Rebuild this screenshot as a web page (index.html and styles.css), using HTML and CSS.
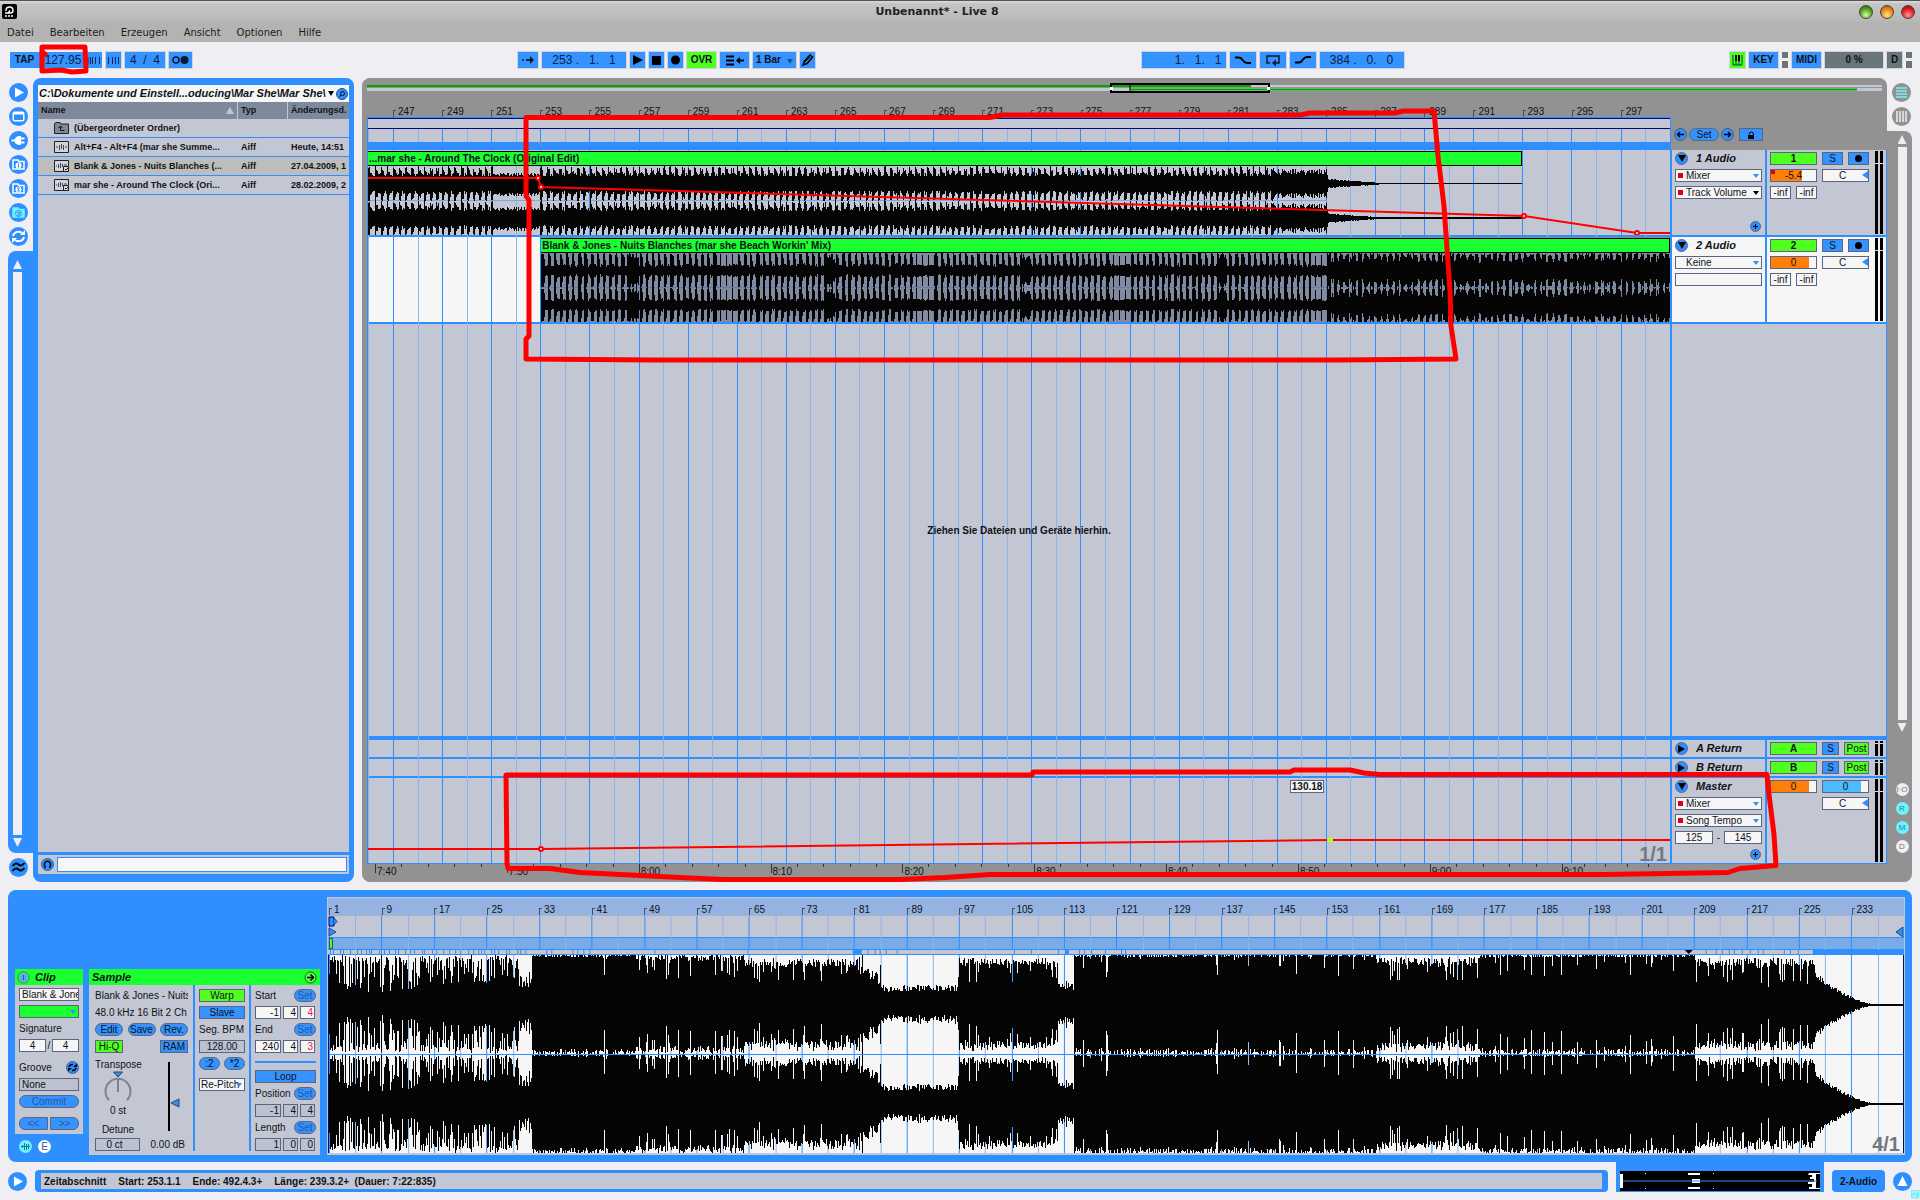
FILE: index.html
```html
<!DOCTYPE html>
<html lang="de">
<head>
<meta charset="utf-8">
<title>Unbenannt* - Live 8</title>
<meta name="viewport" content="width=device-width, initial-scale=1">
<link rel="stylesheet" href="styles.css">
</head>
<body>
<header class="titlebar">
  <svg class="app-icon" viewBox="0 0 15 15" width="15" height="15"><rect width="15" height="15" rx="2" fill="#000"/><path d="M4 7V6.500Q4 3 7.500 3T11 6.500Q11 9 8.500 9H6L8 6.500M3 9h3M3 12h2M6 12h2M9 12h2" fill="none" stroke="#fff" stroke-width="1.400"/></svg>
  <h1>Unbenannt* - Live 8</h1>
  <div class="orbs"><button class="orb orb-green" aria-label="Minimieren"></button><button class="orb orb-amber" aria-label="Maximieren"></button><button class="orb orb-red" aria-label="Schließen"></button></div>
</header>
<nav class="menubar"><a href="#">Datei</a><a href="#">Bearbeiten</a><a href="#">Erzeugen</a><a href="#">Ansicht</a><a href="#">Optionen</a><a href="#">Hilfe</a></nav>

<section class="transport" aria-label="Transport">
  <div class="group">
    <div class="joined"><button class="tb w29">TAP</button><input class="tb num tempo" aria-label="Tempo" value="127.95"><button class="tb w15" aria-label="Nudge -"><svg viewBox="0 0 15 16" width="15" height="16"><path d="M1 5v7M3.500 5v7M5.500 5v7M8.500 5v7M12.500 5v7" stroke="#0b2a55"/></svg></button></div>
    <button class="tb w15" aria-label="Nudge +"><svg viewBox="0 0 15 16" width="15" height="16"><path d="M2.500 5v7M6.500 5v7M9.500 5v7M12.500 5v7" stroke="#0b2a55"/></svg></button>
    <button class="tb num w40">4&nbsp; /&nbsp; 4</button>
    <button class="tb w23" aria-label="Metronom"><svg viewBox="0 0 23 16" width="23" height="16"><circle cx="7" cy="8" r="3" fill="none" stroke="#0b1a30" stroke-width="1.500"/><circle cx="15.500" cy="8" r="4" fill="#0b1a30"/></svg></button>
  </div>
  <div class="group mid">
    <button class="tb w20" aria-label="Folgen"><svg viewBox="0 0 20 16" width="20" height="16"><path d="M4 8h2M8 8h2" stroke="#0b3a75" stroke-width="2"/><path d="M9 7h3V4l4 4-4 4V9H9z" fill="#0b1a30"/></svg></button>
    <button class="tb num w84">253 . &nbsp; 1. &nbsp; 1</button>
    <button class="tb w15" aria-label="Start"><svg viewBox="0 0 15 16" width="15" height="16"><path d="M3 3l10 5-10 5z" fill="#000"/></svg></button>
    <button class="tb w15" aria-label="Stopp"><svg viewBox="0 0 15 16" width="15" height="16"><path d="M3 4h9v9H3z" fill="#000"/></svg></button>
    <button class="tb w15" aria-label="Aufnahme"><svg viewBox="0 0 15 16" width="15" height="16"><circle cx="7.500" cy="8" r="4.500" fill="#000"/></svg></button>
    <button class="tb green w29">OVR</button>
    <button class="tb w29" aria-label="Zurück zum Arrangement"><svg viewBox="0 0 29 16" width="29" height="16"><path d="M6 4.500h8M6 8.500h8M6 12.500h8M17 8.500h7" stroke="#000" stroke-width="2"/><path d="M16 8.500l4-3.500v7z"/></svg></button>
    <span class="tb quant w43"><select aria-label="Quantisierung"><option>1 Bar</option></select></span>
    <button class="tb w15" aria-label="Stift"><svg viewBox="0 0 15 16" width="15" height="16"><path d="M3 13l1.500-4L10 3l2.500 2L7 11.500z" fill="none" stroke="#000" stroke-width="1.500"/><path d="M5 10l5-5" stroke="#000"/></svg></button>
  </div>
  <div class="group loopgroup">
    <button class="tb num w84 tailed">1. &nbsp; 1. &nbsp; 1</button>
    <button class="tb w26" aria-label="Punch-In"><svg viewBox="0 0 26 16" width="26" height="16"><path d="M5 5.500h4q2 0 4 3t5 2.500h3" fill="none" stroke="#000" stroke-width="2"/></svg></button>
    <button class="tb w26" aria-label="Loop"><svg viewBox="0 0 26 16" width="26" height="16"><path d="M10 11H7V4h12v7h-4" fill="none" stroke="#0b1a30" stroke-width="1.500"/><path d="M12 11l4-3.500v7z" fill="#0b1a30"/></svg></button>
    <button class="tb w26" aria-label="Punch-Out"><svg viewBox="0 0 26 16" width="26" height="16"><path d="M5 10.500h4q2 0 4-3t5-2.500h3" fill="none" stroke="#000" stroke-width="2"/></svg></button>
    <button class="tb num w84">384 . &nbsp; 0. &nbsp; 0</button>
  </div>
  <div class="group end">
    <button class="tb green w15" aria-label="Keyboard"><svg viewBox="0 0 15 16" width="15" height="16"><path d="M3 3v10h9V3M6 3v10M9 3v10" fill="none" stroke="#043" /><path d="M5 3h2v6H5zM8 3h2v6H8z"/></svg></button>
    <button class="tb w29">KEY</button>
    <i class="leds"></i>
    <button class="tb w29">MIDI</button>
    <span class="tb gray w58">0 %</span>
    <span class="tb gray w15">D</span>
    <i class="leds"></i>
  </div>
</section>

<main class="workspace">
  <aside class="rail">
    <button class="rb" aria-label="Browser"><svg viewBox="0 0 19 19"><circle cx="9.500" cy="9.500" r="9.500"/><path d="M6 4.500l9 5-9 5z" fill="#fff"/></svg></button>
    <button class="rb" aria-label="Live-Geräte"><svg viewBox="0 0 19 19"><circle cx="9.500" cy="9.500" r="9.500"/><rect x="3.500" y="4.500" width="12" height="10" rx="2" fill="#fff"/><path d="M5 7.500h9V13H5z" fill="#2f8fff"/></svg></button>
    <button class="rb" aria-label="Plug-Ins"><svg viewBox="0 0 19 19"><circle cx="9.500" cy="9.500" r="9.500"/><path d="M2.500 9.500H6" stroke="#fff" stroke-width="2"/><path d="M12 5v9H9.500Q5.500 13 5.500 9.500T9.500 5z" fill="#fff"/><path d="M12 7.500h3.500M12 11.500h3.500" stroke="#fff" stroke-width="2"/></svg></button>
    <button class="rb" aria-label="Datei-Browser 1"><svg viewBox="0 0 19 19"><circle cx="9.500" cy="9.500" r="9.500"/><path d="M4 5h5l1 1.500h5V14H4z" fill="none" stroke="#fff" stroke-width="1.500"/><circle cx="9.500" cy="10.500" r="3" fill="#fff"/><path d="M9.500 8.500v4" stroke="#2f8fff"/></svg></button>
    <button class="rb" aria-label="Datei-Browser 2"><svg viewBox="0 0 19 19"><circle cx="9.500" cy="9.500" r="9.500"/><path d="M4 5h5l1 1.500h5V14H4z" fill="none" stroke="#fff" stroke-width="1.500"/><circle cx="9.500" cy="10.500" r="3" fill="#fff"/><path d="M8 9h2.500L8.500 12H11" fill="none" stroke="#2f8fff"/></svg></button>
    <button class="rb" aria-label="Datei-Browser 3"><svg viewBox="0 0 19 19"><circle cx="9.500" cy="9.500" r="9.500"/><path d="M4 5h5l1 1.500h5V14H4z" fill="#6ff2ff" stroke="#6ff2ff" stroke-width="1.500"/><circle cx="9.500" cy="10.500" r="3" fill="none" stroke="#2f8fff"/><path d="M8.500 9.500h2l-1 1h1v1.500h-2" fill="none" stroke="#2f8fff"/></svg></button>
    <button class="rb" aria-label="Hot-Swap"><svg viewBox="0 0 19 19"><circle cx="9.500" cy="9.500" r="9.500"/><path d="M4 9a5.500 5 0 0 1 9-3M15 10a5.500 5 0 0 1-9 3" fill="none" stroke="#fff" stroke-width="2"/><path d="M11 8h5V3zM8 11H3v5z" fill="#fff"/></svg></button>
    <div class="rail-scroll"><i class="tri up"></i><i class="thumb"></i><i class="tri down"></i></div>
    <button class="rb" aria-label="Groove-Pool"><svg viewBox="0 0 19 19"><circle cx="9.500" cy="9.500" r="9.500"/><path d="M3.500 8q3-4 6-1.500t6-1.500M3.500 13q3-4 6-1.500t6-1.500" fill="none" stroke="#000" stroke-width="2"/></svg></button>
  </aside>

  <section class="browser">
    <div class="path"><span>C:\Dokumente und Einstell...oducing\Mar She\Mar She\</span><i class="pathtri"></i><button class="mini" aria-label="Suchen"><svg viewBox="0 0 12 12" width="12" height="12"><circle cx="6" cy="6" r="5.500" fill="#2f8fff" stroke="#25507f"/><circle cx="6.500" cy="5.500" r="2" fill="none" stroke="#012"/><path d="M5 7L3.500 9" stroke="#012"/></svg></button></div>
    <table class="files">
      <thead><tr><th>Name<i class="sort"></i></th><th>Typ</th><th>Änderungsd.</th></tr></thead>
      <tbody>
        <tr><td><svg viewBox="0 0 15 12" width="15" height="12"><path d="M.5 11.500v-10L2 .5h4l1 1.500h7.500v9.500z" fill="#7f899c" stroke="#222"/><path d="M10.500 8.500H6.500V4M4.500 6l2-2 2 2" fill="none" stroke="#111"/></svg>(Übergeordneter Ordner)</td><td></td><td></td></tr>
        <tr><td><svg viewBox="0 0 15 12" width="15" height="12"><path d="M.5 .5h14v11H.5z" fill="#d0d4de" stroke="#222"/><path d="M2 6h2M5.500 4v5M7.500 3v5M9.500 4v5M11 6h2" fill="none" stroke="#444"/></svg>Alt+F4 - Alt+F4 (mar she Summe...</td><td>Aiff</td><td>Heute, 14:51</td></tr>
        <tr class="sel"><td><svg viewBox="0 0 15 12" width="15" height="12"><path d="M.5 .5h14v11H.5z" fill="#d0d4de" stroke="#222"/><path d="M2 6h1M4.500 4v4M6.500 3v5M8.500 4v3M10 5h3" fill="none" stroke="#444"/><path d="M9.500 6.500h5v5h-5zM11 9l1 1 2-2" fill="#d0d4de" stroke="#222"/></svg>Blank &amp; Jones - Nuits Blanches (...</td><td>Aiff</td><td>27.04.2009, 1</td></tr>
        <tr><td><svg viewBox="0 0 15 12" width="15" height="12"><path d="M.5 .5h14v11H.5z" fill="#d0d4de" stroke="#222"/><path d="M2 6h1M4.500 4v4M6.500 3v5M8.500 4v3M10 5h3" fill="none" stroke="#444"/><path d="M9.500 6.500h5v5h-5zM11 9l1 1 2-2" fill="#d0d4de" stroke="#222"/></svg>mar she - Around The Clock (Ori...</td><td>Aiff</td><td>28.02.2009, 2</td></tr>
      </tbody>
    </table>
    <div class="preview"><svg viewBox="0 0 13 13" width="13" height="13"><circle cx="6.500" cy="6.500" r="6" fill="#2f8fff" stroke="#3b5f8c"/><path d="M4.500 10Q2.500 7 4 4.500 6.500 2 9 4.500 10.500 7 8.500 10" fill="none" stroke="#012" stroke-width="1.500"/></svg><input aria-label="Vorhören"></div>
  </section>

  <section class="arrange">
    <div class="overview">
      <svg viewBox="0 0 1515 10" preserveAspectRatio="none"><path d="M0 2h1515v2H0zM0 5h1515v3H0z" fill="#c3c7d4"/><path d="M0 2h884v2H0zM763 5.500h727v2H763z" fill="#00a800"/><path d="M744 1h158v8H744z" fill="none" stroke="#000" stroke-width="2"/><path d="M763 2v6" stroke="#000"/><path d="M743 4h3v3h-3zM900 4h3v3h-3z" fill="#fff"/></svg>
    </div>
    <div class="ruler beat" id="beatRuler"></div>
    <div class="rows">
      <svg class="gridlines" id="arrGrid" preserveAspectRatio="none" viewBox="0 0 1302 100"></svg>
      <div class="scrub">
        <div class="scrub-lane"><div class="navy"></div><div class="markers"></div><div class="bluebar"><i></i></div></div>
        <div class="setbar"><button class="mini" aria-label="Vorheriger Locator"><svg viewBox="0 0 13 13" width="13" height="13"><circle cx="6.500" cy="6.500" r="6" fill="#2f8fff" stroke="#4b5b77"/><path d="M10 6.500H4M6 4L3.500 6.500 6 9" stroke="#000" stroke-width="1.500" fill="none"/></svg></button><button class="pill set-main">Set</button><button class="mini" aria-label="Nächster Locator"><svg viewBox="0 0 13 13" width="13" height="13"><circle cx="6.500" cy="6.500" r="6" fill="#2f8fff" stroke="#4b5b77"/><path d="M3 6.500h6M7 4l2.500 2.500L7 9" stroke="#000" stroke-width="1.500" fill="none"/></svg></button><button class="box blue lock" aria-label="Hüllkurven sperren"><svg viewBox="0 0 10 10" width="10" height="10"><path d="M2 5h6v4H2z"/><path d="M3 4.500Q3 2 5.500 2 7.500 2 7.500 5" fill="none" stroke="#000"/></svg></button></div>
      </div>

      <div class="row tall">
        <div class="lane">
          <div class="clip clip1"><div class="clipname">...mar she - Around The Clock (Original Edit)</div><svg id="wave1" class="wave" preserveAspectRatio="none"></svg></div>
          <svg class="auto" viewBox="0 0 1302 85" preserveAspectRatio="none"><path d="M0 28h170l3 9L1156 66l113 17h33"/><g class="node"><circle cx="170" cy="28" r="2"/><circle cx="173" cy="37" r="2"/><circle cx="1156" cy="66" r="2"/><circle cx="1269" cy="83" r="2"/></g></svg>
        </div>
        <div class="head">
          <div class="hl"><button class="fold down" aria-label="Zuklappen"></button><b>1 Audio</b></div>
          <label class="chooser"><i class="dot"></i><select aria-label="Gerät"><option>Mixer</option></select></label>
          <label class="chooser dark"><i class="dot"></i><select aria-label="Parameter"><option>Track Volume</option></select></label>
          <button class="plus" aria-label="Spur hinzufügen"></button>
        </div>
        <div class="mix"><div class="cells"><button class="box green act">1</button><button class="box blue">S</button><button class="box blue" aria-label="Scharf"><i class="rec"></i></button><span class="box vol v70"><i class="flag"></i>-5.4</span><span class="box white pan">C</span><span class="inf"><span class="box white">-inf</span><span class="box white">-inf</span></span></div><div class="meter"><i></i><i></i></div></div>
      </div>

      <div class="row tall picked">
        <div class="lane">
          <div class="clip clip2"><div class="clipname">Blank &amp; Jones - Nuits Blanches (mar she Beach Workin' Mix)</div><svg id="wave2" class="wave" preserveAspectRatio="none"></svg></div>
        </div>
        <div class="head">
          <div class="hl"><button class="fold down" aria-label="Zuklappen"></button><b>2 Audio</b></div>
          <label class="chooser"><i class="dot none"></i><select aria-label="Gerät"><option>Keine</option></select></label>
          <span class="box empty"></span>
        </div>
        <div class="mix"><div class="cells"><button class="box green act">2</button><button class="box blue">S</button><button class="box blue" aria-label="Scharf"><i class="rec"></i></button><span class="box vol v85">0</span><span class="box white pan">C</span><span class="inf"><span class="box white">-inf</span><span class="box white">-inf</span></span></div><div class="meter"><i></i><i></i></div></div>
      </div>

      <div class="row drop">
        <div class="lane"><p>Ziehen Sie Dateien und Geräte hierhin.</p></div>
        <div class="rest"></div>
      </div>

      <div class="row short">
        <div class="lane"></div>
        <div class="head"><div class="hl"><button class="fold" aria-label="Aufklappen"></button><b>A Return</b></div></div>
        <div class="mix"><div class="cells ret"><button class="box green act">A</button><button class="box blue">S</button><button class="box green post">Post</button></div><div class="meter"><i></i><i></i></div></div>
      </div>
      <div class="row short">
        <div class="lane"></div>
        <div class="head"><div class="hl"><button class="fold" aria-label="Aufklappen"></button><b>B Return</b></div></div>
        <div class="mix"><div class="cells ret"><button class="box green act">B</button><button class="box blue">S</button><button class="box green post">Post</button></div><div class="meter"><i></i><i></i></div></div>
      </div>
      <div class="row tall last">
        <div class="lane">
          <svg class="auto" viewBox="0 0 1302 85" preserveAspectRatio="none"><path d="M0 71h173l789-9h340"/><g class="node"><circle cx="173" cy="71" r="2"/></g><circle cx="962" cy="62" r="3" fill="#b8f53c"/></svg>
          <span class="tip">130.18</span><span class="zoomtag">1/1</span>
        </div>
        <div class="head">
          <div class="hl"><button class="fold down" aria-label="Zuklappen"></button><b>Master</b></div>
          <label class="chooser"><i class="dot"></i><select aria-label="Gerät"><option>Mixer</option></select></label>
          <label class="chooser"><i class="dot"></i><select aria-label="Parameter"><option>Song Tempo</option></select></label>
          <div class="range"><input class="box white" aria-label="Minimum" value="125"><span>-</span><input class="box white" aria-label="Maximum" value="145"></div>
          <button class="plus" aria-label="Spur hinzufügen"></button>
        </div>
        <div class="mix"><div class="cells"><span class="box vol v85 act">0</span><span class="box cue">0</span><span class="box white pan below">C</span></div><div class="meter"><i></i><i></i></div></div>
      </div>
    </div>
    <div class="ruler time" id="timeRuler"></div>
  </section>

  <aside class="right">
    <button class="rb gray" aria-label="Arrangement"><svg viewBox="0 0 19 19"><circle cx="9.500" cy="9.500" r="9.500"/><path d="M4 5h11M4 8h11M4 11h11M4 14h11" stroke="#6ff2ff" stroke-width="1.500"/></svg></button>
    <button class="rb gray" aria-label="Session"><svg viewBox="0 0 19 19"><circle cx="9.500" cy="9.500" r="9.500"/><path d="M5 4v11M8 4v11M11 4v11M14 4v11" stroke="#eee" stroke-width="1.500"/></svg></button>
    <div class="right-scroll"><i class="tri up"></i><i class="thumb"></i><i class="tri down"></i>
      <div class="toggles"><button>I·O</button><button class="on">R</button><button class="on">M</button><button>D</button></div></div>
  </aside>
</main>

<section class="detail">
  <div class="boxes">
    <div class="clipcol">
      <div class="panel clipbox">
        <h2><svg viewBox="0 0 13 13" width="13" height="13"><circle cx="6.500" cy="6.500" r="5.500" fill="#5fd0a0" stroke="#3b7f5c"/><circle cx="6.500" cy="6.500" r="3.500" fill="#4af"/><path d="M6.500 4v5" stroke="#1b5f9c"/></svg>Clip</h2>
        <div class="col">
          <input class="box white left" aria-label="Name" value="Blank &amp; Jones">
          <label class="chooser colorsel"><select aria-label="Farbe"><option></option></select></label>
          <span class="lbl">Signature</span>
          <div class="rowf sig"><input class="box white" aria-label="Zähler" value="4"><span>/</span><input class="box white" aria-label="Nenner" value="4"></div>
          <div class="rowf lbl gap5"><span>Groove</span><button class="mini" aria-label="Groove Hot-Swap"><svg viewBox="0 0 13 13" width="13" height="13"><circle cx="6.500" cy="6.500" r="6" fill="#2f8fff" stroke="#3b5f8c"/><path d="M3 6q1-3 4-2.500M10 7q-1 3-4 2.500" fill="none" stroke="#000" stroke-width="1.500"/><path d="M7 6h4V2.500zM6 7H2v3.500z"/></svg></button></div>
          <button class="box plain left">None</button>
          <button class="pill dim">Commit</button>
          <div class="rowf pair gap5"><button class="box blue dim rl">&lt;&lt;</button><button class="box blue dim rr">&gt;&gt;</button></div>
        </div>
      </div>
      <div class="tabs"><button class="on" aria-label="Sample"><svg viewBox="0 0 13 13" width="13" height="13"><path d="M2 6.500h9M3.500 5v3M5.500 3v7M7.500 4v6M9.500 4v5" stroke="#157a9c"/></svg></button><button>E</button></div>
    </div>
    <div class="panel sample">
      <h2>Sample<button class="mini go" aria-label="Bearbeiten"><svg viewBox="0 0 13 13" width="13" height="13"><circle cx="6.500" cy="6.500" r="5.500" fill="#5aff3c" stroke="#063"/><path d="M3 6.500h6M6.500 3.500l3 3-3 3" fill="none" stroke="#000" stroke-width="1.500"/></svg></button></h2>
      <div class="cols">
        <div class="col ca">
          <span class="lbl">Blank &amp; Jones - Nuits</span><span class="lbl">48.0 kHz 16 Bit 2 Ch</span>
          <div class="rowf three"><button class="pill">Edit</button><button class="pill">Save</button><button class="pill">Rev.</button></div>
          <div class="rowf ends"><button class="box green">Hi-Q</button><button class="box blue">RAM</button></div>
          <div class="tune">
            <div class="dialcol"><span>Transpose</span><svg viewBox="0 0 32 34" width="32" height="34"><path d="M11.500 1h9L16 6z" fill="#2f8fff" stroke="#345"/><path d="M7 29A12.500 12.500 0 1 1 25 29M16 8v13" fill="none" stroke="#7d828c" stroke-width="2"/></svg><span class="st">0 st</span><span class="det">Detune</span></div>
            <svg class="gain" viewBox="0 0 14 70" width="14" height="70"><path d="M1 0h2v69H1z"/><path d="M4 41l8-4v8z" fill="#2f8fff" stroke="#345"/></svg>
          </div>
          <div class="rowf foot"><span class="box plain">0 ct</span><span>0.00 dB</span></div>
        </div>
        <div class="col cb">
          <button class="box green">Warp</button><button class="box blue">Slave</button><span class="lbl">Seg. BPM</span><span class="box plain">128.00</span>
          <div class="rowf pair"><button class="pill">:2</button><button class="pill">*2</button></div>
          <label class="chooser warpmode"><select aria-label="Warp-Modus"><option>Re-Pitch</option></select></label>
        </div>
        <div class="col cc">
          <div class="rowf ends"><span>Start</span><button class="pill dim">Set</button></div>
          <div class="pos"><span class="box white">-1</span><span class="box white">4</span><span class="box white red">4</span></div>
          <div class="rowf ends"><span>End</span><button class="pill dim">Set</button></div>
          <div class="pos"><span class="box white">240</span><span class="box white">4</span><span class="box white red">3</span></div>
          <hr>
          <button class="box blue">Loop</button>
          <div class="rowf ends"><span>Position</span><button class="pill dim">Set</button></div>
          <div class="pos"><span class="box plain">-1</span><span class="box plain">4</span><span class="box plain">4</span></div>
          <div class="rowf ends"><span>Length</span><button class="pill dim">Set</button></div>
          <div class="pos"><span class="box plain">1</span><span class="box plain">0</span><span class="box plain">0</span></div>
        </div>
      </div>
    </div>
  </div>
  <div class="editor">
    <div class="ruler clipr" id="clipRuler"></div>
    <div class="editor-body">
      <svg class="gridlines" id="clipGrid" preserveAspectRatio="none" viewBox="0 0 1574 100"></svg>
      <div class="e-loop"><svg viewBox="0 0 10 22" width="10" height="22"><path d="M1 1h5v9H1z" fill="#2f8fff" stroke="#00006a"/><path d="M6 2l3 3.500L6 9M1 12l7 4-7 4z" fill="#2f8fff" stroke="#134a9c"/></svg><svg viewBox="0 0 10 22" width="10" height="22"><path d="M9 11v10L2 16z" fill="#2f8fff" stroke="#134a9c"/></svg></div>
      <div class="e-band"><i></i></div>
      <svg class="e-marks" id="marks" viewBox="0 0 1574 4" preserveAspectRatio="none"></svg>
      <div class="e-wave"><svg id="wave3" class="wave" preserveAspectRatio="none"></svg><span class="zoomtag">4/1</span></div>
    </div>
  </div>
</section>

<footer class="status">
  <button class="rb" aria-label="Detailansicht"><svg viewBox="0 0 19 19"><circle cx="9.500" cy="9.500" r="9.500"/><path d="M6 4.500l9 5-9 5z" fill="#fff"/></svg></button>
  <div class="info"><span>Zeitabschnitt</span><span>Start: 253.1.1</span><span>Ende: 492.4.3+</span><span>Länge: 239.3.2+&nbsp; (Dauer: 7:22:835)</span></div>
  <div class="minimap"><svg viewBox="0 0 200 20" preserveAspectRatio="none"><path d="M0 0h200v20H0z"/><path d="M0 3h3v14H0zM25 2h1v1h-1zM25 17h1v1h-1zM93 2h1v1h-1zM93 17h1v1h-1zM68 2h12v2H68zM72 8h8v4h-8zM68 16h12v2H68zM189 2h11v1h-4v14h4v1h-11v-2h3v-3h-4v-2h6V8h-4V6h2V4h-4z" fill="#fff"/><path d="M3 10h194" stroke="#2f8fff"/></svg></div>
  <button class="tracktab">2-Audio</button>
  <button class="rb" aria-label="Einblenden"><svg viewBox="0 0 19 19"><circle cx="9.500" cy="9.500" r="9.500"/><path d="M9.500 4l5 10h-10z" fill="#fff"/></svg></button>
  <svg class="grip" viewBox="0 0 9 9" width="9" height="9"><path d="M.5 .5h7v7h-7zM2 2l4 4M3 2l-1 4M6 2v5" fill="none" stroke="#6ff2ff" stroke-width="1.500"/></svg>
</footer>

<svg class="scribble" viewBox="0 0 1920 1200" preserveAspectRatio="none" aria-hidden="true">
  <path d="M42 47h43l1 24-14 1-11-2-19 1zM42 52l3 2"/>
  <path d="M526 117.500H990l12-2.500h298l10-2h85l8-2h31l4 45 6 50 6 85 1 35 5 33-118 1H655l-129-1v-20l3-3V200l-3-4z"/>
  <path d="M506 775h526l1-3h257l4-2h56l14 3 16 1.500h387l1 12 6 48 2 31-36 3-12 4-123 2H990l-45 3-45 2H723l-43-2-40-2-60-3-30-4h-42l-1-5z"/>
</svg>
<script src="script.js"></script>
</body>
</html>
```
FILE: styles.css
```css
:root{--blue:#2f8fff;--panel:#c3c7d4;--gray:#929292;--bg:#efeef3;--line:#5c6480;--green:#4fff1f;--clip:#19ff2f;--white:#f6f6f6}
*{box-sizing:border-box}
html,body{margin:0}
body{position:relative;min-height:100vh;display:flex;flex-direction:column;background:var(--bg);font:10px/13px "Liberation Sans",Arial,sans-serif;color:#101216;overflow:hidden}
button,input,select{font:inherit;color:inherit;border:0;padding:0;margin:0;background:none;border-radius:0;appearance:none;min-width:0}
svg{display:block;flex:none}
i{display:block}
h1,h2,p{margin:0}

.titlebar{height:22px;display:grid;grid-template-columns:19fr auto 20fr;align-items:center;padding:0 2px;background:linear-gradient(#dcdcdc,#c4c4c4 3px,#bdbdbd 70%,#b6b6b6);border-top:1px solid #555}
.titlebar h1{font:bold 11px/20px "DejaVu Sans",sans-serif;color:#222}
.orbs{display:flex;gap:7px;justify-self:end;padding-right:3px}
.orb{width:14px;height:14px;border-radius:50%;border:1px solid #444}
.orb-green{background:radial-gradient(circle at 50% 75%,#d2ff9c,#4f9b1c 60%,#23550c)}
.orb-amber{background:radial-gradient(circle at 50% 75%,#ffe880,#ec7d10 60%,#94460a)}
.orb-red{background:radial-gradient(circle at 50% 75%,#ff9a9a,#e2121c 60%,#8c0710)}
.menubar{height:20px;display:flex;gap:16px;padding:0 7px;background:#b4b3b3;font:10px/21px "DejaVu Sans",sans-serif}
.menubar a{color:#1c1c1c;text-decoration:none}

.transport{height:36px;display:flex;align-items:center;padding:0 8px 0 10px}
.group{display:flex;gap:4px}
.joined{display:flex}
.group.mid{margin-left:326px}
.loopgroup,.end{margin-left:auto}
.tb{height:16px;background:#3593ff;font-weight:bold;line-height:16px;text-align:center;outline:1px solid #cfd4df;display:flex;align-items:center;justify-content:center;white-space:nowrap}
.joined .tb{outline:0}
.tb.num{font-size:12px;font-weight:normal;color:#0b2246}
.tb.tailed{justify-content:flex-end;padding-right:4px}
.tb.green{background:var(--green)}
.tb.gray{background:#68757b}
.tempo{width:48px}
.w15{width:15px}.w20{width:20px}.w23{width:23px}.w26{width:26px}.w29{width:29px}.w40{width:40px}.w43{width:43px}.w58{width:58px}.w84{width:84px}
.quant select{width:100%;padding-left:3px;font-weight:bold}
.quant{position:relative}
.quant::after{content:"";position:absolute;right:3px;top:7px;border:3px solid transparent;border-top:5px solid #1b4f94;border-bottom:0}
.leds{width:6px;height:16px;background:linear-gradient(#68757b 6px,transparent 6px 9px,#68757b 9px)}

.workspace{flex:1;display:flex;padding:0 8px}
.rb{width:19px;height:19px;flex:none}
.rb svg{width:19px;height:19px}
.rb circle:first-child{fill:var(--blue)}
.rb.gray circle:first-child{fill:var(--gray)}
.rail{width:25px;display:flex;flex-direction:column;gap:5px;padding:5px 0 5px 1px}
.rail-scroll{flex:1;margin-left:-1px;background:var(--blue);border-radius:8px 0 0 8px;display:flex;flex-direction:column;gap:3px;padding:9px 0 6px 5px}
.tri{width:9px;height:9px;background:var(--bg);flex:none}
.up{clip-path:polygon(50% 0,100% 100%,0 100%)}
.down.tri{clip-path:polygon(0 0,100% 0,50% 100%)}
.thumb{flex:1;width:9px;background:var(--bg)}

.browser{width:321px;background:var(--blue);border-radius:8px;padding:7px 5px 8px;display:flex;flex-direction:column}
.path{height:17px;background:var(--white);display:flex;align-items:center;padding:0 0 0 1px;font-size:11px;font-weight:bold;font-style:italic;white-space:nowrap}
.path span{flex:1;min-width:0}
.pathtri{border:3px solid transparent;border-top:5px solid #000;border-bottom:0;margin:0 2px}
.mini{width:13px;height:13px;flex:none}
.files{flex:1;width:100%;background:var(--panel);font-size:9px;font-weight:bold;display:block;overflow:hidden}
.files tr{display:grid;grid-template-columns:199px 50px 1fr;height:19px;border-bottom:1px solid var(--blue);align-items:center;white-space:nowrap}
.files tbody,.files thead{display:block}
.files thead tr{height:17px;border:0;background:#7f899c;align-items:stretch}
.files th{text-align:left;padding:0 3px;line-height:17px;display:flex;justify-content:space-between;align-items:center;border-left:1px solid var(--panel)}
.files th:first-child{border:0}
.files td{padding:0 0 0 4px;display:flex;align-items:center;gap:5px}
.files td:first-child{padding-left:16px}
.files .sel{background:#bdbdbd}
.sort{border:4px solid transparent;border-bottom:7px solid var(--panel);border-top:0}
.preview{border-top:3px solid var(--blue);height:22px;background:var(--panel);display:flex;align-items:center;gap:3px;padding:0 2px 0 3px}
.preview input{flex:1;height:15px;background:var(--white);border:1px solid var(--blue)}

.arrange{flex:1;min-width:0;margin-left:8px;background:var(--gray);border-radius:8px 8px 0 8px;display:flex;flex-direction:column}
.overview{height:18px;padding:5px 5px 0}
.overview svg{width:100%;height:10px}
.ruler{display:flex;white-space:nowrap;font-size:10px}
.ruler span{flex:1 1 0;min-width:0;position:relative}
.beat{height:21px;padding:0 217px 0 31px;align-items:flex-end}
.beat span,.clipr span{height:11px;padding-left:5px;line-height:11px;background:linear-gradient(#4a4d55,#4a4d55) 0 4px/1px 100% no-repeat,linear-gradient(#4a4d55,#4a4d55) 0 4px/3px 1px no-repeat}
.time{height:18px;padding:0 217px 0 13px;align-items:stretch}
.time span{padding:1px 0 0 2px;line-height:13px;flex-grow:1318;background:linear-gradient(#333,#333) 0 0/1px 9px no-repeat,repeating-linear-gradient(to right,#333 0 1px,transparent 1px 20%) 0 0/100% 3px no-repeat}
.time span:last-child{flex-grow:1080}

.rows{flex:1;position:relative;display:flex;flex-direction:column;border-bottom:1px solid var(--blue);margin-left:5px}
.gridlines{position:absolute;left:1px;top:12px;width:calc(100% - 218px);height:calc(100% - 12px);z-index:1;pointer-events:none}
.scrub{display:flex;height:33px}
.scrub-lane{flex:1;background:var(--panel);border:solid var(--blue);border-width:1px 0 0 1px}
.navy{height:11px;border:1px solid #000a78;border-width:1px 0;background:var(--panel)}
.markers{height:13px}
.bluebar{height:8px;background:var(--blue);position:relative;z-index:2}
.bluebar i{margin-left:13%;width:4px;height:4px;background:#7f899c;clip-path:polygon(0 0,100% 0,100% 100%)}
.setbar{width:217px;display:flex;gap:2px;padding:11px 0 0 3px;border-left:1px solid var(--blue)}
.setbar .pill{width:30px}
.lock{width:24px;margin-left:3px}
.lock svg{margin:0 auto}
.row{display:flex;border-bottom:2px solid var(--blue)}
.tall{height:87px}
.tall.last{height:85px;border:0}
.short{height:19px}
.drop{flex:1;border-bottom-width:4px}
.lane{flex:1;min-width:0;position:relative;background:var(--panel);border-left:1px solid var(--blue);display:flex}
.picked .lane,.picked .head,.picked .mix{background:var(--white)}
.head{width:97px;background:var(--panel);border-left:2px solid var(--blue);border-right:2px solid var(--blue);padding:2px 3px;display:flex;flex-direction:column;gap:4px}
.mix{width:120px;background:var(--panel);border-right:1px solid var(--blue);padding:2px 3px 0;display:flex}
.rest{width:217px;background:var(--panel);border:solid var(--blue);border-width:0 1px 0 2px}
.drop p{margin:auto;font-weight:bold;position:relative;z-index:2}
.hl{height:13px;display:flex;align-items:center;gap:8px;font-style:italic;font-size:11px;white-space:nowrap}
.fold{width:13px;height:13px;border-radius:50%;background:var(--blue);border:1px solid var(--line);display:flex;align-items:center;justify-content:center}
.fold::before{content:"";border:4px solid transparent;border-left:7px solid #000;border-right:0}
.fold.down::before{border:4px solid transparent;border-top:7px solid #000;border-bottom:0}
.box{height:13px;border:1px solid var(--line);line-height:11px;text-align:center;display:block;overflow:hidden;white-space:nowrap}
.blue{background:#3593ff}.box.green{background:var(--green)}.white{background:var(--white)}.plain{background:#bcc1cf}
.left{text-align:left;padding-left:2px}
.chooser{height:13px;border:1px solid var(--line);background:var(--white);display:flex;align-items:center;position:relative;overflow:hidden}
.chooser select{flex:1;width:100%;height:11px;line-height:11px}
.chooser::after{content:"";position:absolute;right:2px;top:4px;border:3px solid transparent;border-top:4px solid var(--blue);border-bottom:0}
.chooser.dark::after{border-top-color:#000}
.dot{width:5px;height:5px;background:#e00012;margin:0 3px 0 2px;flex:none}
.dot.none{background:none}
.picked .empty{width:100%}
.plus{align-self:flex-end;width:11px;height:11px;border-radius:50%;border:1px solid var(--line);background:linear-gradient(#000,#000) center/5px 1px no-repeat,linear-gradient(#000,#000) center/1px 5px no-repeat,var(--blue);margin:auto 1px 1px 0}
.cells{width:100px;display:grid;grid-template-columns:47px 21px 21px;grid-auto-rows:13px;gap:4px 5px}
.cells.ret{grid-template-columns:47px 17px 25px}
.rec{width:7px;height:7px;border-radius:50%;background:#000;margin:2px auto}
.act{font-weight:bold}
.pan{grid-column:2/4;position:relative;padding-right:6px}
.below{grid-row:2}
.pan::after{content:"";position:absolute;right:0;top:1px;border:4px solid transparent;border-right:6px solid var(--blue);border-left:0}
.vol{position:relative;background:linear-gradient(to right,#ff7f0a 70%,var(--white) 70%)}
.v85{background:linear-gradient(to right,#ff7f0a 84%,var(--white) 84%);font-weight:normal}
.cue{grid-column:2/4;background:linear-gradient(to right,#4dbcff 84%,var(--white) 84%)}
.flag{position:absolute;left:0;top:0;width:4px;height:4px;background:#e00012}
.inf{display:flex;gap:5px}
.inf .box{width:21px}
.meter{display:flex;gap:2px;margin:-1px 0 1px 6px}
.meter i{width:3px;background:linear-gradient(#000 12px,#ddd 12px 13px,#000 13px)}
.short .meter i{background:linear-gradient(#000 2px,#ddd 2px 3px,#000 3px)}
.clip{position:relative;z-index:2;display:flex;flex-direction:column;padding-top:1px}
.clip1{width:88.6%}
.clip2{margin-left:13.3%;flex:1;background:rgba(122,132,153,.95)}
.clipname{height:15px;background:var(--clip);border:1px solid #000;border-left:0;font-weight:bold;line-height:13px;padding-left:1px;white-space:nowrap}
.wave{width:100%;flex:1;min-height:0}
.auto{position:absolute;left:0;top:0;width:100%;height:100%;z-index:3}
.auto path{fill:none;stroke:#f00;stroke-width:2}
.node circle{fill:#fff;stroke:#f00;stroke-width:2}
.tip{position:absolute;z-index:3;left:70.800%;top:2px;padding:0 1px;background:var(--white);border:1px solid var(--line);font-weight:bold;line-height:11px}
.zoomtag{position:absolute;z-index:3;right:3px;bottom:0;font:bold 20px/18px "Liberation Sans",Arial,sans-serif;color:#74777e}
.range{display:flex;justify-content:space-between}
.range .box{width:38px}

.right{width:25px;display:flex;flex-direction:column;align-items:flex-end;gap:5px;padding-top:5px}
.right .rb{margin-right:1px}
.right-scroll{flex:1;width:100%;background:var(--gray);border-radius:0 8px 8px 0;display:flex;flex-direction:column;align-items:center;gap:3px;padding:4px 0 0 5px}
.toggles{display:flex;flex-direction:column;gap:6px;margin:48px 0 29px}
.toggles button{width:13px;height:13px;border-radius:50%;background:var(--bg);color:#777;font-size:8px;line-height:13px;text-align:center}
.toggles .on{background:#6ff2ff;color:#28879c}

.detail{margin:8px 8px 0;background:var(--blue);border-radius:8px;height:272px;padding:7px;display:flex;gap:7px}
.boxes{display:flex;gap:6px;align-items:flex-end}
.clipcol{display:flex;flex-direction:column;width:68px;height:186px}
.panel{background:var(--panel)}
.panel h2{height:16px;background:var(--clip);font:italic bold 11px/16px "Liberation Sans",Arial,sans-serif;display:flex;align-items:center;gap:4px;padding:0 3px;justify-content:space-between}
.clipbox h2{justify-content:flex-start;gap:5px;padding:0 2px}
.col{display:flex;flex-direction:column;gap:4px;padding-top:4px}
.clipbox .col{padding:3px 4px 4px}
.clipbox .box{width:100%}
.clipbox .sig .box{width:27px}
.rowf{display:flex;justify-content:space-between;align-items:center;height:13px;white-space:nowrap}
.gap5{margin-top:5px}
.pair{gap:2px}
.clipbox .pair .box{width:29px}
.lbl{height:13px;line-height:14px;overflow:hidden;white-space:nowrap}
.colorsel{background:var(--clip)}
.pill{height:13px;border:1px solid var(--line);border-radius:7px;background:#3593ff;line-height:11px;text-align:center}
.dim{color:#2a5796}
.rl{border-radius:6px 0 0 6px}.rr{border-radius:0 6px 6px 0}
.tabs{display:flex;gap:6px;padding:6px 4px}
.tabs button{width:13px;height:13px;border-radius:50%;background:#fff;color:#2b60a8}
.tabs .on{background:#6ff2ff}
.sample{width:231px;height:186px}
.cols{display:flex;padding:0 4px 0 6px}
.ca{width:93px}
.three .pill{width:28px}
.ca .ends .box{width:28px}
.tune{display:flex;height:77px;padding-top:1px}
.dialcol{width:72px;display:flex;flex-direction:column;white-space:nowrap}
.dialcol svg{margin-left:7px}
.dialcol .st,.dialcol .det{width:46px;text-align:center;line-height:11px}
.dialcol .det{margin-top:8px}
.gain{margin-top:4px}
.foot .box{width:45px;padding-right:6px}
.foot span:last-child{padding-right:3px}
.cb{width:58px;margin-left:5px;border:solid var(--blue);border-width:0 2px;padding-left:4px;padding-right:4px}
.cb .pair .pill{width:21px}
.warpmode{margin-top:4px}
.warpmode select{padding-left:1px}
.cc{flex:1;padding-left:4px}
.cc .pill{width:22px}
.cc hr{width:100%;height:9px;margin:0;border:solid transparent;border-width:4px 0 3px;background:var(--blue);background-clip:padding-box}
.pos{display:grid;grid-template-columns:26px 15px 15px;gap:2px}
.pos .box{text-align:right;padding-right:1px}
.red{color:#f01840}

.editor{flex:1;min-width:0;border:1px solid var(--panel);border-bottom-width:2px;display:flex;flex-direction:column}
.clipr{height:17px;background:#94b3e2;padding-left:1px;align-items:flex-end}
.editor-body{flex:1;position:relative;background:var(--panel);display:flex;flex-direction:column;border-top:1px solid #a9b2c8}
.editor-body .gridlines{left:0;top:0;width:100%;height:100%}
.e-loop{height:21px;display:flex;justify-content:space-between;position:relative;z-index:2}
.e-band{height:13px;border:solid var(--blue);border-width:1px 0;background:#7aabe9}
.e-band i{width:4px;height:11px;margin-left:1px;background:var(--green);border:1px solid #356;position:relative;z-index:2}
.e-marks{width:100%;height:5px;position:relative;z-index:2;border-bottom:1px solid var(--blue);background:var(--panel)}
.e-wave{flex:1;min-height:0;background:var(--white);position:relative;display:flex;border-right:1px solid #00125a;border-left:1px solid #00125a}
.e-wave .wave{height:100%;position:relative;z-index:2}

.status{display:flex;height:30px;margin-top:8px;padding:0 8px 8px;align-items:center;position:relative}
.info{flex:1;height:22px;margin:0 8px;border:solid var(--blue);border-width:3px 6px;border-radius:4px;background:var(--panel);display:flex;align-items:center;gap:12px;padding:0 3px;font-weight:bold;white-space:nowrap}
.minimap{width:208px;height:30px;margin-top:-8px;padding:9px 4px 1px;background:var(--blue)}
.minimap svg{width:100%;height:20px}
.tracktab{width:53px;height:22px;margin:0 8px;background:var(--blue);border-radius:4px;font-weight:bold;font-size:10px}
.grip{position:absolute;right:0;bottom:1px}
.scribble{position:absolute;left:0;top:0;width:100%;height:100%;z-index:10;pointer-events:none}
.scribble path{fill:none;stroke:#f00;stroke-width:5;stroke-linejoin:round;stroke-linecap:round}
```
FILE: script.js
```js
const $ = id => document.getElementById(id);

// Repeatable noise, so every load draws the same waves.
function noise(seed) {
  let s = seed;
  return () => (s = (s * 1664525 + 1013904223) % 4294967296) / 4294967296;
}

function ruler(id, labels) {
  $(id).innerHTML = labels.map(t => `<span>${t}</span>`).join('');
}
ruler('beatRuler', Array.from({length: 26}, (_, i) => 247 + 2 * i));
ruler('clipRuler', Array.from({length: 30}, (_, i) => 1 + 8 * i));
ruler('timeRuler', ['7:40', '7:50', '8:00', '8:10', '8:20', '8:30', '8:40', '8:50', '9:00', '9:10']);

function grid(id, start, step, width) {
  let major = '', minor = '';
  for (let x = start; x < width; x += step) {
    major += `M${Math.round(x)} 0h1v100h-1z`;
  }
  for (let x = start - step / 2; x < width; x += step) {
    if (x > 0) minor += `M${Math.round(x)} 0h1v100h-1z`;
  }
  $(id).innerHTML = `<path d="${minor}" fill="#8db4e8"/><path d="${major}" fill="#2f8fff"/>`;
}
grid('arrGrid', 25, 49.1, 1302);
grid('clipGrid', 1, 52.43, 1574);

function wave(id, width, height, seed, amp, back) {
  const r = noise(seed), half = height / 4;
  let d = '';
  for (let x = 0; x < width; x++) {
    const [a, b] = amp(x, r);
    for (const c of [half, 3 * half]) {
      const up = Math.min(half, a * half), dn = Math.min(half, b * half);
      d += `M${x} ${(c - up).toFixed(1)}h1V${(c + dn + .6).toFixed(1)}h-1z`;
    }
  }
  const el = $(id);
  el.setAttribute('viewBox', `0 0 ${width} ${height}`);
  el.setAttribute('shape-rendering', 'crispEdges');
  el.innerHTML = back + `<path d="${d}" fill="#050505"/>`;
}

const mid = (w, h, color) => `<path d="M0 ${h / 2 - .5}h${w}v1H0z" fill="${color}"/>`;

wave('wave1', 1153, 69, 7, (x, r) => {
  if (x > 959) {
    const k = Math.max(.02, .3 * (1 - (x - 959) / 60) * (.6 + r() * .4));
    return [k, k];
  }
  if (x > 905) { const k = .45 + r() * .4; return [k, k]; }
  const phase = x % 6.14;
  if (x > 124 && x < 170) { const k = .42 + r() * .2; return [k, k + .1]; }
  const k = phase < 1.3 ? .85 + r() * .15 : phase < 3 ? .6 + r() * .3 : .4 + r() * .22;
  return [k, phase < 1.8 ? .9 + r() * .1 : k];
}, mid(959, 69, '#7fa6dd'));

wave('wave2', 1129, 69, 21, (x, r) => {
  const phase = x % 6.14;
  if (x > 785) { const k = phase < 3.6 ? .85 + r() * .2 : .45 + r() * .4; return [k, k]; }
  if (x % 197 > 178) { const k = .24 + r() * .12 + (phase < 1 ? .6 : 0); return [k, k]; }
  if (x % 98 > 88) { const k = .6 + r() * .4; return [k, k]; }
  const k = phase < 2.2 ? .9 + r() * .15 : phase < 3.2 ? .5 + r() * .4 : .2 + r() * .2;
  return [k, k];
}, mid(1129, 69, '#5f7ea9'));

// Sections of the song: end, body level, spread, chance and floor of a gap.
const parts = [
  [102, .84, .16, .5, .25], [190, .86, .14, .46, .42], [203, .4, .3, .3, .35],
  [306, .95, .1, .05, .55], [414, .88, .14, .14, .5], [528, .76, .18, .16, .45],
  [552, 0, .22, .1, .35], [628, .26, .14, 0, .3], [728, .8, .14, .2, .45],
  [744, .3, .2, 0, .3], [1046, .95, .1, .07, .55], [1150, .78, .18, .16, .48],
  [1364, .95, .1, .07, .55], [1484, .78, .16, .16, .35]
];
wave('wave3', 1572, 198, 99, (x, r) => {
  if (x >= 1484) {
    const t = Math.min(1, (x - 1484) / 62);
    const k = Math.max(.014, .6 * (1 - t) ** 1.7 + (r() - .5) * .14 * (1 - t));
    return [k, k];
  }
  const p = parts.find(q => x < q[0]);
  const level = p[1] || .62 - (x - 528) / 24 * .28;
  let k = level + r() * p[2];
  if (r() < p[3]) k = Math.min(k, p[4] + r() * Math.max(0, level - p[4]));
  if (x > 528 && x < 560 && r() < .1) k += .25;
  return [k, k - r() * .09];
}, '');
$('wave3').innerHTML += mid(1572, 198, '#2f8fff');

// Transient marks above the clip wave.
const r = noise(5);
let m = '';
for (let x = 2; x < 200; x += 2 + Math.floor(r() * 7)) m += `M${x} 0h1v4h-1z`;
for (const x of [218, 223, 244, 249, 255, 261, 326, 419, 539, 546, 551, 557, 568, 685, 702, 729, 750, 755, 762, 776, 792, 796, 1376, 1386, 1392, 1399, 1404, 1412, 1420, 1428, 1433, 1454, 1460, 1468]) m += `M${x} 0h1v4h-1z`;
m += 'M524 0h9v4h-9zM736 0h4v4h-4zM1483 0h91v4h-91z';
$('marks').innerHTML = `<path d="${m}" fill="#2f8fff"/><path d="M1355 0h8l-4 4z"/>`;
```
